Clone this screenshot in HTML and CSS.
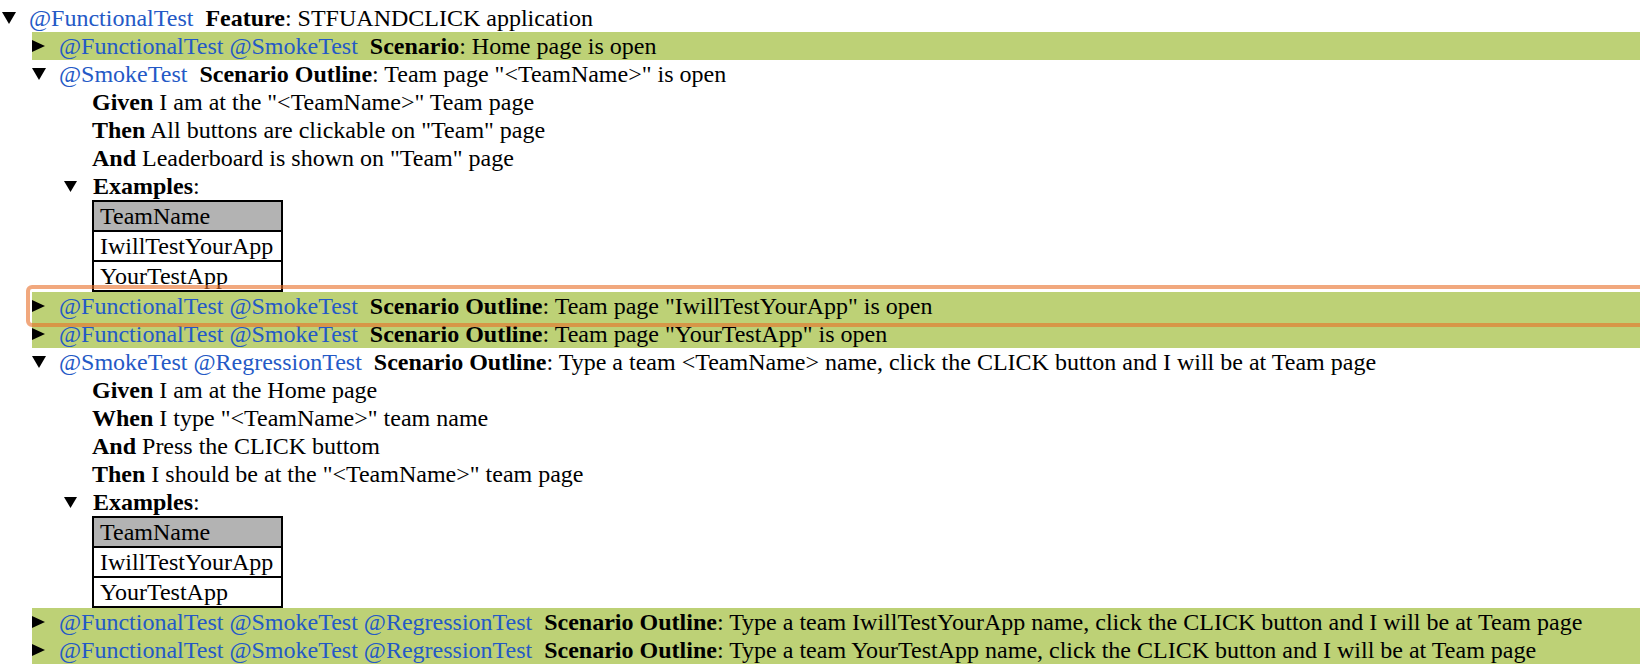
FILE: index.html
```html
<!DOCTYPE html>
<html lang="en">
<head>
<meta charset="utf-8">
<title>STFUANDCLICK application</title>
<link rel="stylesheet" href="styles.css">
</head>
<body>
<div class="feature">
  <div class="row">
    <span class="tri"><svg class="down" width="14" height="12" viewBox="0 0 14 12"><polygon points="0,0 14,0 7,12"/></svg></span>
    <span class="text"><span class="tags">@FunctionalTest</span>&nbsp; <b>Feature</b>: STFUANDCLICK application</span>
  </div>
  <div class="kids">
    <div class="row passed">
      <span class="tri"><svg width="13" height="12" viewBox="0 0 13 12"><polygon points="0,0 13,6 0,12"/></svg></span>
      <span class="text"><span class="tags">@FunctionalTest @SmokeTest</span>&nbsp; <b>Scenario</b>: Home page is open</span>
    </div>

    <div class="row">
      <span class="tri"><svg width="14" height="12" viewBox="0 0 14 12"><polygon points="0,0 14,0 7,12"/></svg></span>
      <span class="text"><span class="tags">@SmokeTest</span>&nbsp; <b>Scenario Outline</b>: Team page "&lt;TeamName&gt;" is open</span>
    </div>
    <div class="kids">
      <div class="step"><b>Given</b> I am at the "&lt;TeamName&gt;" Team page</div>
      <div class="step"><b>Then</b> All buttons are clickable on "Team" page</div>
      <div class="step"><b>And</b> Leaderboard is shown on "Team" page</div>
      <div class="row examples">
        <span class="tri"><svg width="13" height="11" viewBox="0 0 13 11"><polygon points="0,0 13,0 6.5,11"/></svg></span>
        <span class="text"><b>Examples</b>:</span>
      </div>
      <table class="ex-table">
        <tr><th>TeamName</th></tr>
        <tr><td>IwillTestYourApp</td></tr>
        <tr><td>YourTestApp</td></tr>
      </table>
    </div>

    <div class="row passed highlight">
      <span class="tri"><svg width="13" height="12" viewBox="0 0 13 12"><polygon points="0,0 13,6 0,12"/></svg></span>
      <span class="text"><span class="tags">@FunctionalTest @SmokeTest</span>&nbsp; <b>Scenario Outline</b>: Team page "IwillTestYourApp" is open</span>
    </div>
    <div class="row passed">
      <span class="tri"><svg width="13" height="12" viewBox="0 0 13 12"><polygon points="0,0 13,6 0,12"/></svg></span>
      <span class="text"><span class="tags">@FunctionalTest @SmokeTest</span>&nbsp; <b>Scenario Outline</b>: Team page "YourTestApp" is open</span>
    </div>

    <div class="row">
      <span class="tri"><svg width="14" height="12" viewBox="0 0 14 12"><polygon points="0,0 14,0 7,12"/></svg></span>
      <span class="text"><span class="tags">@SmokeTest @RegressionTest</span>&nbsp; <b>Scenario Outline</b>: Type a team &lt;TeamName&gt; name, click the CLICK button and I will be at Team page</span>
    </div>
    <div class="kids">
      <div class="step"><b>Given</b> I am at the Home page</div>
      <div class="step"><b>When</b> I type "&lt;TeamName&gt;" team name</div>
      <div class="step"><b>And</b> Press the CLICK buttom</div>
      <div class="step"><b>Then</b> I should be at the "&lt;TeamName&gt;" team page</div>
      <div class="row examples">
        <span class="tri"><svg width="13" height="11" viewBox="0 0 13 11"><polygon points="0,0 13,0 6.5,11"/></svg></span>
        <span class="text"><b>Examples</b>:</span>
      </div>
      <table class="ex-table">
        <tr><th>TeamName</th></tr>
        <tr><td>IwillTestYourApp</td></tr>
        <tr><td>YourTestApp</td></tr>
      </table>
    </div>

    <div class="row passed">
      <span class="tri"><svg width="13" height="12" viewBox="0 0 13 12"><polygon points="0,0 13,6 0,12"/></svg></span>
      <span class="text"><span class="tags">@FunctionalTest @SmokeTest @RegressionTest</span>&nbsp; <b>Scenario Outline</b>: Type a team IwillTestYourApp name, click the CLICK button and I will be at Team page</span>
    </div>
    <div class="row passed">
      <span class="tri"><svg width="13" height="12" viewBox="0 0 13 12"><polygon points="0,0 13,6 0,12"/></svg></span>
      <span class="text"><span class="tags">@FunctionalTest @SmokeTest @RegressionTest</span>&nbsp; <b>Scenario Outline</b>: Type a team YourTestApp name, click the CLICK button and I will be at Team page</span>
    </div>

    <div class="row">
      <span class="tri"><svg width="14" height="12" viewBox="0 0 14 12"><polygon points="0,0 14,0 7,12"/></svg></span>
      <span class="text"><span class="tags">@RegressionTest @STFU</span>&nbsp; <b>Scenario Outline</b>: Team name is clickable and available</span>
    </div>
  </div>
</div>
</body>
</html>
```

FILE: styles.css
```css
html {
  margin: 0;
  padding: 0;
  overflow: hidden;
  background: #ffffff;
}

body {
  margin: 0;
  padding: 4px 0 0 2px;
  height: 670px;
  box-sizing: border-box;
  overflow: hidden;
  font-family: "Liberation Serif", "Times New Roman", serif;
  font-size: 24px;
  line-height: 28px;
  color: #000000;
}

.row {
  display: flex;
  align-items: center;
  height: 28px;
  white-space: nowrap;
}

.tri {
  flex: 0 0 27px;
  display: flex;
  align-items: center;
}

.tri svg {
  display: block;
  fill: #000000;
}

.tags {
  color: #2459c6;
}

.kids {
  margin-left: 30px;
}

.passed {
  background: #bdd176;
}

.step {
  height: 28px;
  padding-left: 30px;
  white-space: nowrap;
}

.examples .tri {
  flex-basis: 29px;
  margin-left: 2px;
}

.ex-table {
  border-collapse: collapse;
  margin-left: 30px;
}

.ex-table th,
.ex-table td {
  border: 2px solid #000000;
  padding: 0 8px 0 6px;
  font-weight: normal;
  text-align: left;
  line-height: 28px;
}

.ex-table th {
  background: #b3b3b3;
}

.highlight {
  position: relative;
}

.highlight::after {
  content: "";
  position: absolute;
  left: -6px;
  top: -7px;
  bottom: -7px;
  right: -20px;
  border: 4px solid rgba(232, 110, 40, 0.6);
  border-radius: 6px;
  pointer-events: none;
}
```
